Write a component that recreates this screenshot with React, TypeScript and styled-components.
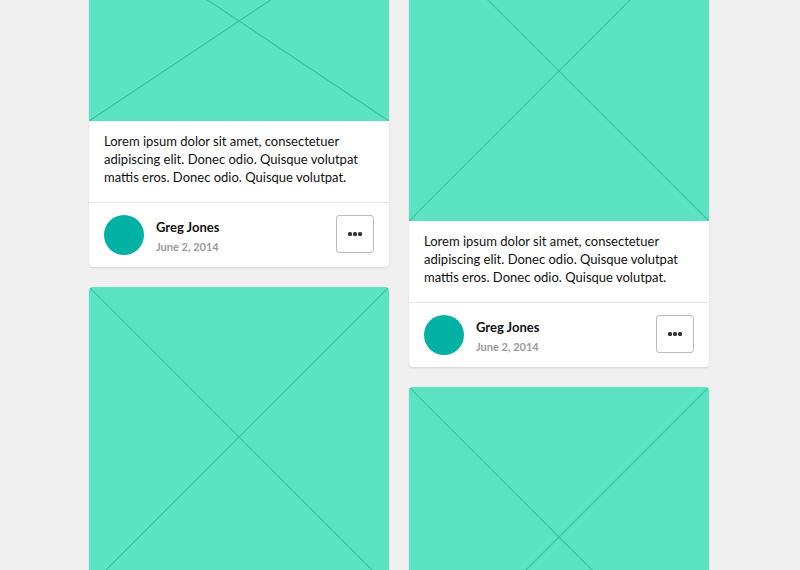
import styled, { createGlobalStyle } from "styled-components";

const GlobalStyle = createGlobalStyle`
	html, body {
		margin: 0;
		padding: 0;
		background: #f0f0f0;
		font-family: "Source Sans Pro", Lato, "Open Sans", sans-serif;
		overflow: hidden;
	}
`;

const Page = styled.div`
	width: 800px;
	height: 570px;
	overflow: hidden;
	display: flex;
	gap: 20px;
	padding-left: 89px;
	box-sizing: border-box;
`;

const Column = styled.div`
	width: 300px;
	margin-top: -79px;
	display: flex;
	flex-direction: column;
	gap: 20px;
`;

const Card = styled.article`
	background: #fff;
	border-radius: 4px;
	box-shadow: 0 1px 2px rgba(0, 0, 0, 0.12);
	overflow: hidden;
	flex-shrink: 0;
`;

const Placeholder = styled.div<{ $h: number }>`
	height: ${(p) => p.$h}px;
	background: #5be3c2;
	svg {
		display: block;
	}
`;

const Body = styled.p`
	margin: 0;
	padding: 11px 15px 16px;
	font-size: 13px;
	line-height: 18px;
	color: #111;
	border-bottom: 1px solid #e6e6e6;
`;

const Footer = styled.div`
	display: flex;
	align-items: center;
	padding: 12px 15px;
	gap: 12px;
`;

const Avatar = styled.div`
	width: 40px;
	height: 40px;
	border-radius: 50%;
	background: #00b1a4;
`;

const Meta = styled.div`
	flex: 1;
	display: flex;
	flex-direction: column;
	gap: 5px;
	margin-top: 1px;
`;

const Name = styled.span`
	font-size: 13px;
	font-weight: 700;
	color: #111;
`;

const Date = styled.span`
	font-size: 11px;
	font-weight: 700;
	color: #9a9a9a;
`;

const MoreButton = styled.button`
	width: 38px;
	height: 38px;
	border: 1px solid #bcbcbc;
	border-radius: 3px;
	background: #fff;
	display: flex;
	align-items: center;
	justify-content: center;
	gap: 1px;
	padding: 0;
	margin-top: -2px;
	span {
		width: 4px;
		height: 4px;
		border-radius: 1.5px;
		background: #333;
	}
`;

function Image({ h }: { h: number }) {
	return (
		<Placeholder $h={h}>
			<svg width="300" height={h} viewBox={`0 0 300 ${h}`}>
				<line x1="0" y1="0" x2="300" y2={h} stroke="#42c0a0" strokeWidth="1.2" />
				<line x1="300" y1="0" x2="0" y2={h} stroke="#42c0a0" strokeWidth="1.2" />
			</svg>
		</Placeholder>
	);
}

function PostCard({ h }: { h: number }) {
	return (
		<Card>
			<Image h={h} />
			<Body>
				Lorem ipsum dolor sit amet, consectetuer adipiscing elit. Donec odio. Quisque volutpat mattis eros. Donec odio. Quisque volutpat.
			</Body>
			<Footer>
				<Avatar />
				<Meta>
					<Name>Greg Jones</Name>
					<Date>June 2, 2014</Date>
				</Meta>
				<MoreButton aria-label="More">
					<span />
					<span />
					<span />
				</MoreButton>
			</Footer>
		</Card>
	);
}

export default function App() {
	return (
		<>
			<GlobalStyle />
			<Page>
				<Column>
					<PostCard h={200} />
					<PostCard h={300} />
				</Column>
				<Column>
					<PostCard h={300} />
					<PostCard h={300} />
				</Column>
			</Page>
		</>
	);
}
